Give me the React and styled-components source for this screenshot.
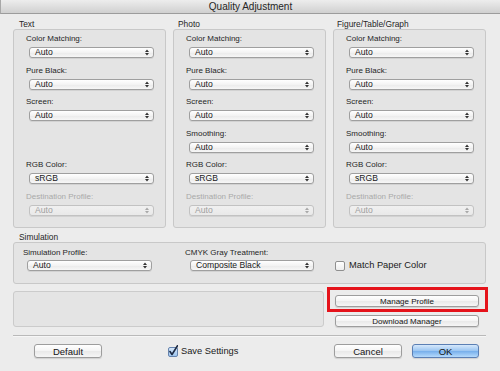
import React from "react";
import styled, { createGlobalStyle } from "styled-components";

const GlobalStyle = createGlobalStyle`
  html, body {
    margin: 0;
    padding: 0;
    background: #ececec;
  }
  body {
    font-family: "Liberation Sans", Arial, sans-serif;
    color: #1c1c1c;
  }
`;

const Window = styled.div`
  width: 500px;
  height: 371px;
  background: #ececec;
  display: flex;
  flex-direction: column;
  overflow: hidden;
`;

const TitleBar = styled.div`
  height: 13px;
  line-height: 13px;
  border-bottom: 1px solid #9c9c9c;
  border-left: 1px solid #a8a8a8;
  background: linear-gradient(#ededed, #d0d0d0);
  text-align: center;
  font-size: 10px;
  color: #262626;
`;

const Content = styled.div`
  display: flex;
  flex-direction: column;
  padding: 0 14px 0 13px;
`;

const Columns = styled.div`
  display: grid;
  grid-template-columns: repeat(3, 153px);
  column-gap: 7px;
  margin-top: 5px;
`;

const GroupTitle = styled.div`
  font-size: 8.4px;
  line-height: ${(p) => (p.$tight ? "9px" : "10px")};
  padding-left: ${(p) => p.$indent || 5}px;
  color: #262626;
`;

const GroupBox = styled.div`
  box-sizing: border-box;
  height: 199px;
  border: 1px solid #c8c8c8;
  border-radius: 3px;
  background: #e4e4e4;
  padding: 4px 12px 0 12px;
`;

const Field = styled.div`
  display: flex;
  flex-direction: column;
  margin-bottom: 7.6px;
  visibility: ${(p) => (p.$hidden ? "hidden" : "visible")};
`;

const Label = styled.div`
  font-size: 8px;
  line-height: 10px;
  height: 10px;
  margin-bottom: ${(p) => (p.$gap !== undefined ? p.$gap : 3)}px;
  color: ${(p) => (p.$disabled ? "#a9a9a9" : "#1f1f1f")};
  white-space: nowrap;
`;

const SelectBox = styled.div`
  box-sizing: border-box;
  width: ${(p) => p.$w || 125}px;
  height: 11px;
  margin-left: ${(p) => p.$ml || 3}px;
  border: 1px solid ${(p) => (p.$disabled ? "#c2c2c2" : "#9f9f9f")};
  border-radius: 3px;
  background: ${(p) =>
    p.$disabled
      ? "linear-gradient(#f0f0f0, #e9e9e9)"
      : "linear-gradient(#ffffff, #f3f3f3 50%, #eaeaea 51%, #f7f7f7)"};
  box-shadow: 0 1px 0 rgba(0, 0, 0, 0.08);
  display: flex;
  align-items: center;
  justify-content: space-between;
  padding: 0 4px 0 5px;
  font-size: 8.6px;
  line-height: 9px;
  color: ${(p) => (p.$disabled ? "#a0a0a0" : "#1a1a1a")};
`;

const Arrows = ({ color }) => (
  <svg width="4" height="7" viewBox="0 0 4 7">
    <path d="M0 3 L2 0.5 L4 3 Z M0 4 L2 6.5 L4 4 Z" fill={color} />
  </svg>
);

const Select = ({ value, disabled, w, ml }) => (
  <SelectBox $disabled={disabled} $w={w} $ml={ml}>
    <span>{value}</span>
    <Arrows color={disabled ? "#a8a8a8" : "#333"} />
  </SelectBox>
);

const SimTitle = styled(GroupTitle)`
  margin-top: 5px;
  padding-left: 6px;
`;

const SimBox = styled.div`
  box-sizing: border-box;
  height: 42px;
  border: 1px solid #c8c8c8;
  border-radius: 3px;
  background: #e4e4e4;
  padding: 5px 9px 0 9px;
  display: grid;
  grid-template-columns: 162px 150px auto;
`;

const SimCol = styled.div`
  display: flex;
  flex-direction: column;
`;

const CheckRow = styled.label`
  display: flex;
  align-items: center;
  gap: ${(p) => p.$gap || 4}px;
  font-size: 9.3px;
  color: #1a1a1a;
  margin-top: ${(p) => p.$mt || 0}px;
  white-space: nowrap;
`;

const LowerRow = styled.div`
  display: flex;
  margin-top: 7px;
  height: 36px;
`;

const EmptyBox = styled.div`
  box-sizing: border-box;
  width: 311px;
  height: 36px;
  border: 1px solid #cbcbcb;
  border-radius: 3px;
  background: #e4e4e4;
`;

const SideButtons = styled.div`
  display: flex;
  flex-direction: column;
  gap: 8px;
  margin-left: 11px;
  padding-top: 4px;
  width: 144px;
`;

const Highlight = styled.div`
  position: relative;
`;

const RedFrame = styled.div`
  position: absolute;
  left: -8px;
  top: -8px;
  right: -9px;
  bottom: -5px;
  border: 3px solid #e5131b;
  pointer-events: none;
`;

const PushButton = styled.div`
  box-sizing: border-box;
  width: ${(p) => (p.$w ? `${p.$w}px` : "100%")};
  height: ${(p) => p.$h || 14}px;
  border: 1px solid ${(p) => (p.$primary ? "#5b7fb4" : "#9d9d9d")};
  border-radius: 3px;
  background: ${(p) =>
    p.$primary
      ? "linear-gradient(#d6e8fb, #99c4f1 50%, #76aeeb 51%, #b5dafc)"
      : "linear-gradient(#ffffff, #f4f4f4 50%, #e9e9e9 51%, #f6f6f6)"};
  box-shadow: 0 1px 1px rgba(0, 0, 0, 0.12);
  display: flex;
  align-items: center;
  justify-content: center;
  font-size: ${(p) => p.$fs || 9.5}px;
  color: #151515;
`;

const Separator = styled.div`
  margin-top: 8px;
  height: 1px;
  background: #b9b9b9;
  box-shadow: 0 1px 0 #f6f6f6;
`;

const BottomRow = styled.div`
  display: flex;
  align-items: center;
  margin-top: 8px;
  padding: 0 7px 0 21px;
`;

const Spacer = styled.div`
  flex: 1;
`;

const CheckIcon = ({ checked }) => (
  <svg width="10" height="12" viewBox="0 0 10 12">
    <defs>
      <linearGradient id={checked ? "cbOn" : "cbOff"} x1="0" y1="0" x2="0" y2="1">
        <stop offset="0" stopColor={checked ? "#d7e8fa" : "#ffffff"} />
        <stop offset="1" stopColor={checked ? "#9cc4ee" : "#ececec"} />
      </linearGradient>
    </defs>
    <rect
      x="0.5"
      y="2.5"
      width="9"
      height="9"
      rx="1.5"
      fill={`url(#${checked ? "cbOn" : "cbOff"})`}
      stroke={checked ? "#6683ad" : "#8f8f8f"}
    />
    {checked && (
      <path
        d="M2 6.5 L4 9.5 L9.5 0.8"
        fill="none"
        stroke="#1d2a44"
        strokeWidth="1.6"
        strokeLinecap="round"
        strokeLinejoin="round"
      />
    )}
  </svg>
);

const columns = [
  { title: "Text", indent: 6, smoothing: false },
  { title: "Photo", indent: 5, smoothing: true },
  { title: "Figure/Table/Graph", indent: 4, smoothing: true },
];

const Column = ({ title, indent, smoothing }) => (
  <div>
    <GroupTitle $indent={indent}>{title}</GroupTitle>
    <GroupBox>
      <Field>
        <Label>Color Matching:</Label>
        <Select value="Auto" />
      </Field>
      <Field>
        <Label>Pure Black:</Label>
        <Select value="Auto" />
      </Field>
      <Field>
        <Label>Screen:</Label>
        <Select value="Auto" />
      </Field>
      <Field $hidden={!smoothing}>
        <Label>Smoothing:</Label>
        <Select value="Auto" />
      </Field>
      <Field>
        <Label>RGB Color:</Label>
        <Select value="sRGB" />
      </Field>
      <Field>
        <Label $disabled>Destination Profile:</Label>
        <Select value="Auto" disabled />
      </Field>
    </GroupBox>
  </div>
);

const App = () => (
  <Window>
    <GlobalStyle />
    <TitleBar>Quality Adjustment</TitleBar>
    <Content>
      <Columns>
        {columns.map((c) => (
          <Column key={c.title} {...c} />
        ))}
      </Columns>

      <SimTitle $tight>Simulation</SimTitle>
      <SimBox>
        <SimCol>
          <Label $gap={2}>Simulation Profile:</Label>
          <Select value="Auto" ml={4} w={125} />
        </SimCol>
        <SimCol>
          <Label $gap={2}>CMYK Gray Treatment:</Label>
          <Select value="Composite Black" ml={5} w={124} />
        </SimCol>
        <SimCol>
          <CheckRow $mt={11}>
            <CheckIcon />
            Match Paper Color
          </CheckRow>
        </SimCol>
      </SimBox>

      <LowerRow>
        <EmptyBox />
        <SideButtons>
          <Highlight>
            <PushButton $h={12} $fs={8}>
              Manage Profile
            </PushButton>
            <RedFrame />
          </Highlight>
          <PushButton $h={12} $fs={8}>
            Download Manager
          </PushButton>
        </SideButtons>
      </LowerRow>

      <Separator />

      <BottomRow>
        <PushButton $w={68}>Default</PushButton>
        <CheckRow $gap={3} style={{ marginLeft: 66 }}>
          <CheckIcon checked />
          Save Settings
        </CheckRow>
        <Spacer />
        <PushButton $w={68}>Cancel</PushButton>
        <PushButton $w={67} $primary style={{ marginLeft: 10 }}>
          OK
        </PushButton>
      </BottomRow>
    </Content>
  </Window>
);

export default App;
